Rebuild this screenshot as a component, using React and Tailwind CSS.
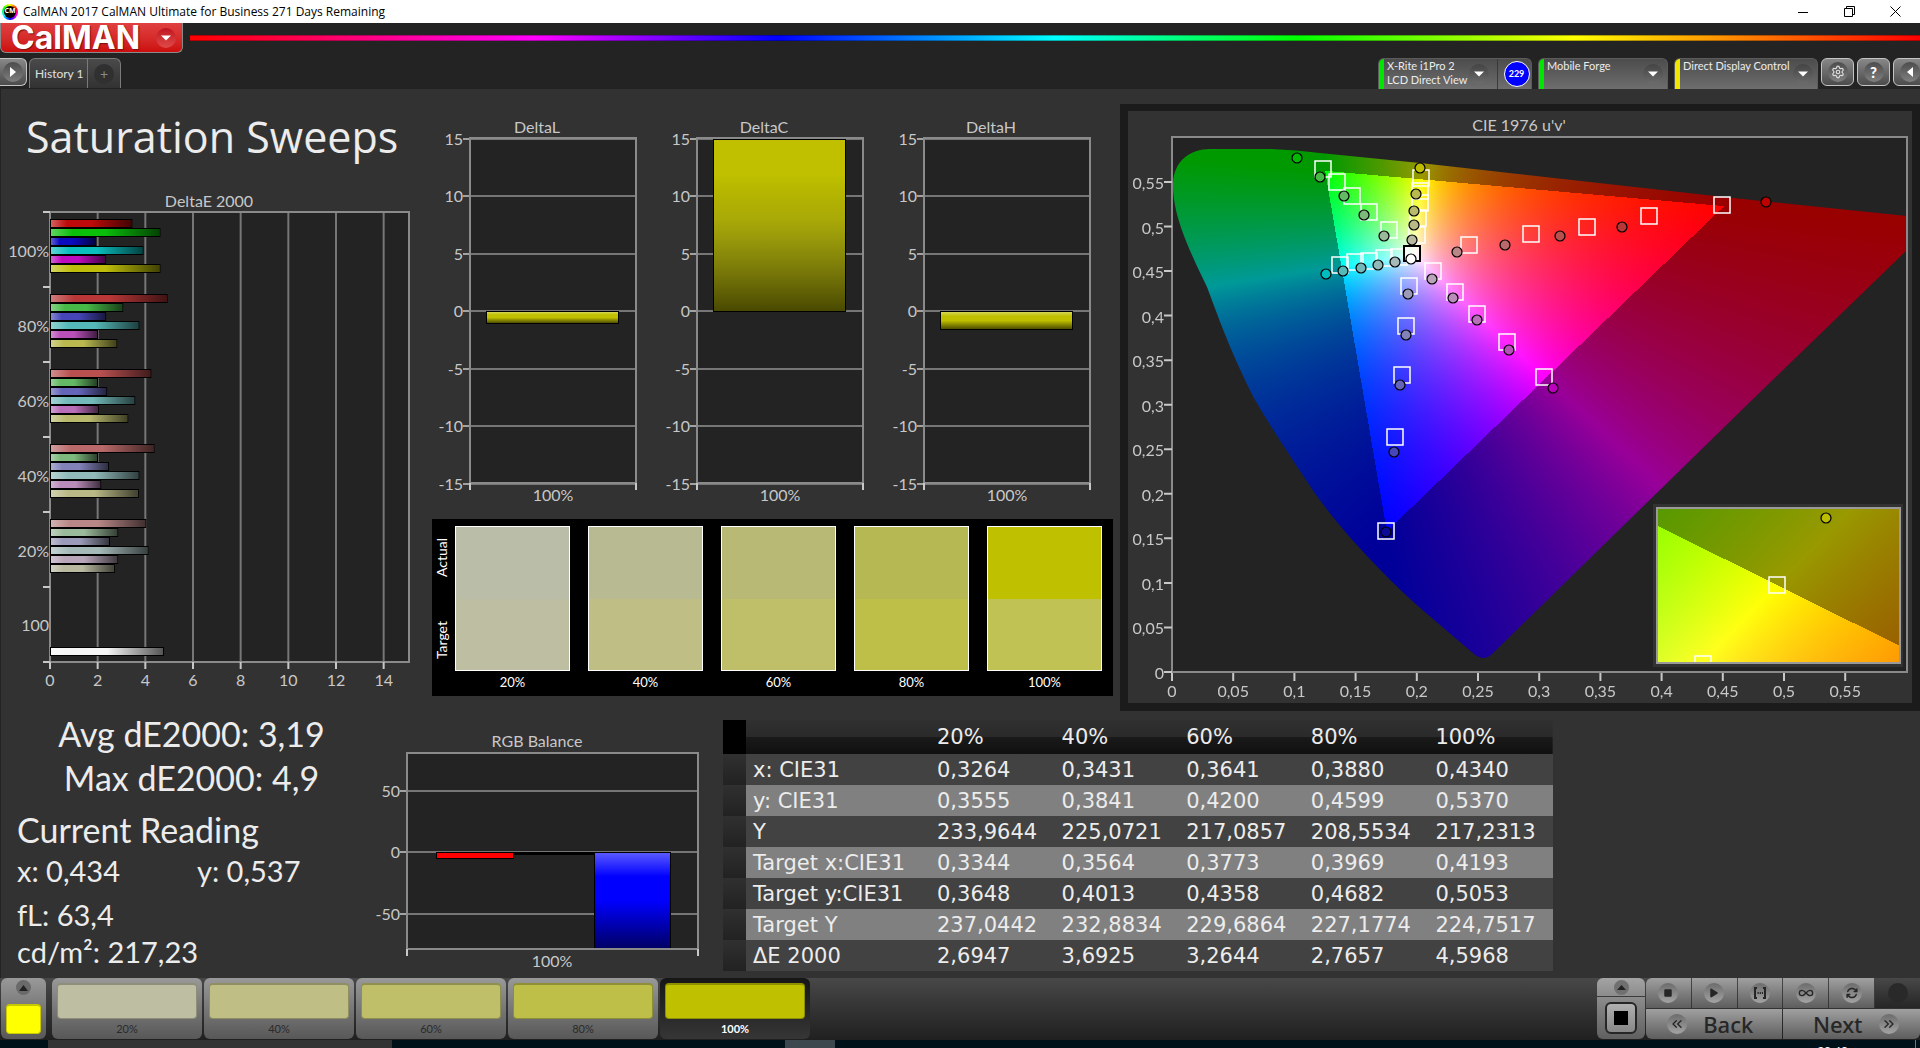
import React, { useEffect, useRef } from 'react'
import { Settings, Infinity as InfinityIcon, ChevronsLeft, ChevronsRight } from 'lucide-react'
import { FaArrowsRotate, FaPlay, FaStop } from 'react-icons/fa6'

const levels = ['20%', '40%', '60%', '80%', '100%']

const deltaE = [
  { label: '100%', bars: [[3.43, '#be0a0a'], [4.6, '#0abe0a'], [1.93, '#0a0abe'], [3.89, '#0abebe'], [2.34, '#be0abe'], [4.6, '#bebe0a']] },
  { label: '80%', bars: [[4.9, '#b93737'], [3.05, '#46b946'], [2.34, '#4646b9'], [3.72, '#55b9b9'], [2.0, '#b950b9'], [2.8, '#b9b950']] },
  { label: '60%', bars: [[4.22, '#b95050'], [2.0, '#64b964'], [2.38, '#6464b9'], [3.55, '#73b9b9'], [2.04, '#b96eb9'], [3.26, '#b9b96e']] },
  { label: '40%', bars: [[4.35, '#b96969'], [2.0, '#7db97d'], [2.46, '#8282b9'], [3.72, '#91b9b9'], [2.13, '#b98cb9'], [3.7, '#b9b987']] },
  { label: '20%', bars: [[4.01, '#b98787'], [2.84, '#9bb99b'], [2.5, '#9b9bb9'], [4.1, '#a5b9b9'], [2.84, '#b9a5b9'], [2.7, '#b9b9a0']] },
]

const swatches = [
  { label: '20%', actual: '#babda8', target: '#bebea3' },
  { label: '40%', actual: '#b8bb91', target: '#bfbf85' },
  { label: '60%', actual: '#b7b975', target: '#bfbf6a' },
  { label: '80%', actual: '#b5b853', target: '#bebf49' },
  { label: '100%', actual: '#bec000', target: '#c0c253' },
]

const steps = [
  { label: '20%', color: '#bebea3' },
  { label: '40%', color: '#bfbf85' },
  { label: '60%', color: '#bfbf6a' },
  { label: '80%', color: '#bebf49' },
  { label: '100%', color: '#bec000' },
]

const tableRows = [
  ['x: CIE31', '0,3264', '0,3431', '0,3641', '0,3880', '0,4340'],
  ['y: CIE31', '0,3555', '0,3841', '0,4200', '0,4599', '0,5370'],
  ['Y', '233,9644', '225,0721', '217,0857', '208,5534', '217,2313'],
  ['Target x:CIE31', '0,3344', '0,3564', '0,3773', '0,3969', '0,4193'],
  ['Target y:CIE31', '0,3648', '0,4013', '0,4358', '0,4682', '0,5053'],
  ['Target Y', '237,0442', '232,8834', '229,6864', '227,1774', '224,7517'],
  ['ΔE 2000', '2,6947', '3,6925', '3,2644', '2,7657', '4,5968'],
]

const targets = [
  [195, 58], [209, 71], [224, 85], [241, 101], [261, 119],
  [212, 154], [227, 151], [241, 150], [256, 147], [271, 146],
  [293, 67], [292, 80], [292, 92], [290, 107], [289, 124],
  [305, 160], [327, 181], [349, 203], [379, 231], [416, 266],
  [281, 175], [278, 215], [274, 264], [267, 326], [258, 420],
  [341, 134], [403, 123], [459, 116], [521, 105], [594, 94],
]

const readings = [
  [169, 47, '#00b900'], [192, 66, '#46b946'], [216, 85, '#64b964'], [236, 104, '#7db97d'], [256, 125, '#9bb99b'],
  [198, 163, '#00bebe'], [215, 160, '#55b9b9'], [233, 157, '#73b9b9'], [250, 154, '#91b9b9'], [267, 151, '#a5b9b9'],
  [292, 57, '#bebe00'], [288, 83, '#b9b950'], [286, 100, '#b9b96e'], [286, 114, '#b9b987'], [284, 129, '#b9b9a0'],
  [304, 168, '#b9a5b9'], [325, 187, '#b98cb9'], [349, 209, '#b96eb9'], [381, 239, '#b950b9'], [425, 277, '#be00be'],
  [280, 183, '#9b9bb9'], [278, 224, '#8282b9'], [272, 274, '#6464b9'], [266, 341, '#4646b9'], [258, 421, '#0a0a96'],
  [329, 141, '#b98787'], [377, 134, '#b96969'], [432, 125, '#b95050'], [494, 116, '#b93737'], [638, 91, '#be0000'],
  [283, 148, '#ffffff'],
]

const LOCUS = 'M1 46 C2 24 18 12 38 12 L99 12 Q125 13 148 16 L248 26 L561 61 L736 79 V112 L580 263 L320 517 Q312 525 302 517 L254 476 C215 442 170 395 142 355 C120 322 100 292 83 263 C60 218 48 185 35 150 C20 118 0 80 1 46 Z'

// plot pixel -> CIE xy
const fromUv = (px, py) => {
  const u = px / 1224.5
  const v = (535 - py) / 891
  const d = 6 * u - 16 * v + 12
  return [(9 * u) / d, (4 * v) / d]
}
const fromXy = (px, py) => [0.4193 + (px - 120) / 3305, 0.5053 - (py - 77) / 2065]

const Chromaticity = ({ width, height, project, outline }) => {
  const ref = useRef(null)

  useEffect(() => {
    const ctx = ref.current.getContext('2d')
    const image = ctx.createImageData(width, height)
    for (let py = 0; py < height; py++) {
      for (let px = 0; px < width; px++) {
        const [x, y] = project(px + 0.5, py + 0.5)
        const X = x / y
        const Z = (1 - x - y) / y
        const rgb = [
          3.2406 * X - 1.5372 - 0.4986 * Z,
          -0.9689 * X + 1.8758 + 0.0415 * Z,
          0.0557 * X - 0.204 + 1.057 * Z,
        ]
        // colours outside the gamut are clipped and dimmed
        const inside = Math.min(...rgb) >= 0
        const max = Math.max(...rgb)
        const i = (py * width + px) * 4
        rgb.forEach((c, n) => {
          image.data[i + n] = (255 * (inside ? 1 : 0.6) * Math.max(c, 0)) / max
        })
        image.data[i + 3] = 255
      }
    }
    ctx.putImageData(image, 0, 0)
    if (outline) {
      ctx.globalCompositeOperation = 'destination-in'
      ctx.fill(new Path2D(outline))
    }
  }, [width, height, project, outline])

  return <canvas ref={ref} width={width} height={height} className="block w-full h-full" />
}

const Shades = () => (
  <svg className="absolute w-0 h-0" aria-hidden="true">
    <defs>
      <linearGradient id="shadeX">
        <stop offset="0" stopColor="#fff" stopOpacity="0.35" />
        <stop offset="0.2" stopColor="#fff" stopOpacity="0" />
        <stop offset="0.5" stopColor="#000" stopOpacity="0" />
        <stop offset="1" stopColor="#000" stopOpacity="0.65" />
      </linearGradient>
      <linearGradient id="shadeY" x2="0" y2="1">
        <stop offset="0" stopColor="#fff" stopOpacity="0.35" />
        <stop offset="0.25" stopColor="#fff" stopOpacity="0" />
        <stop offset="0.5" stopColor="#000" stopOpacity="0" />
        <stop offset="1" stopColor="#000" stopOpacity="0.6" />
      </linearGradient>
      <linearGradient id="shadeTall" x2="0" y2="1">
        <stop offset="0.2" stopColor="#000" stopOpacity="0" />
        <stop offset="0.45" stopColor="#333" stopOpacity="0.15" />
        <stop offset="1" stopColor="#000" stopOpacity="0.62" />
      </linearGradient>
    </defs>
  </svg>
)

const Bar = ({ x, y, width, height, color, shade = 'url(#shadeY)' }) => (
  <g>
    <rect x={x} y={y} width={width} height={height} fill="#000" />
    <rect x={x + 1} y={y + 1} width={width - 2} height={height - 2} fill={color} />
    <rect x={x + 1} y={y + 1} width={width - 2} height={height - 2} fill={shade} />
  </g>
)

const DeltaEChart = () => (
  <svg viewBox="0 0 425 500" className="w-full h-auto font-['Lato',sans-serif] text-base" fill="#c8c8c8">
    <text x="209" y="17" textAnchor="middle">DeltaE 2000</text>
    <rect x="50" y="22" width="359" height="450" fill="#232323" />
    {[2, 4, 6, 8, 10, 12, 14].map((n) => (
      <path key={n} d={`M${50 + n * 24 - n / 6} 22V472`} stroke="#767676" strokeWidth="2" />
    ))}
    <rect x="50" y="22" width="359" height="450" fill="none" stroke="#8a8a8a" strokeWidth="2" />
    {[0, 1, 2, 3, 4, 5, 6].map((n) => (
      <path key={n} d={`M43 ${22 + n * 75}H50`} stroke="#c8c8c8" strokeWidth="2" />
    ))}
    {[0, 2, 4, 6, 8, 10, 12, 14].map((n) => (
      <g key={n}>
        <path d={`M${50 + n * 24 - n / 6} 472V479`} stroke="#c8c8c8" strokeWidth="2" />
        <text x={50 + n * 24 - n / 6} y="496" textAnchor="middle">{n}</text>
      </g>
    ))}
    {deltaE.map((group, g) => (
      <g key={group.label}>
        <text x="49" y={67 + g * 75} textAnchor="end">{group.label}</text>
        {group.bars.map(([value, color], i) => (
          <Bar key={color} x={50} y={29 + g * 75 + i * 9} width={value * 24} height={9} color={color} shade="url(#shadeX)" />
        ))}
      </g>
    ))}
    <text x="49" y="441" textAnchor="end">100</text>
    <Bar x={50} y={457} width={114} height={9} color="#f5f5f5" shade="url(#shadeX)" />
  </svg>
)

const DeltaChart = ({ title, value }) => {
  const zero = 193
  const top = value > 0 ? 21 : zero
  const height = value > 0 ? zero - 20 : Math.round(1 - value * 11.5)
  return (
    <svg viewBox="0 0 227 394" className="w-full h-auto font-['Lato',sans-serif] text-base" fill="#c8c8c8">
      <text x="112" y="15" textAnchor="middle">{title}</text>
      <rect x="45" y="20" width="166" height="345" fill="#232323" />
      {[15, 10, 5, 0, -5, -10, -15].map((n) => {
        const y = Math.round(zero - n * 11.5)
        return (
          <g key={n}>
            <path d={`M45 ${y}H211`} stroke="#767676" strokeWidth="2" />
            <path d={`M38 ${y}H45`} stroke="#c8c8c8" strokeWidth="1.5" />
            <text x="38" y={y + 6} textAnchor="end">{n}</text>
          </g>
        )
      })}
      <Bar x={61} y={top} width={133} height={height} color="#c0c000" shade={value > 0 ? 'url(#shadeTall)' : 'url(#shadeY)'} />
      <rect x="45" y="20" width="166" height="345" fill="none" stroke="#8a8a8a" strokeWidth="2" />
      <path d="M45 365V372M211 365V372" stroke="#c8c8c8" strokeWidth="2" />
      <text x="128" y="383" textAnchor="middle">100%</text>
    </svg>
  )
}

const RgbBalance = () => (
  <svg viewBox="0 0 345 245" className="w-full h-auto font-['Lato',sans-serif] text-base" fill="#c8c8c8">
    <text x="177" y="17" textAnchor="middle">RGB Balance</text>
    <rect x="47" y="23" width="291" height="196" fill="#232323" />
    {[50, 0, -50].map((n) => {
      const y = Math.round(122 - n * 1.23)
      return (
        <g key={n}>
          <path d={`M47 ${y}H338`} stroke="#767676" strokeWidth="2" />
          <path d={`M40 ${y}H47`} stroke="#c8c8c8" strokeWidth="1.5" />
          <text x="40" y={y + 6} textAnchor="end">{n}</text>
        </g>
      )
    })}
    <rect x="154" y="122" width="80" height="3" fill="#000" />
    <Bar x={76} y={122} width={78} height={7} color="#ff0000" shade="none" />
    <Bar x={234} y={122} width={77} height={97} color="#0000ff" />
    <rect x="47" y="23" width="291" height="196" fill="none" stroke="#8a8a8a" strokeWidth="2" />
    <path d="M47 219V226M338 219V226" stroke="#c8c8c8" strokeWidth="2" />
    <text x="192" y="237" textAnchor="middle">100%</text>
  </svg>
)

const decimal = (n) => String(n / 100).replace('.', ',')
const axis = [0, 5, 10, 15, 20, 25, 30, 35, 40, 45, 50, 55]

const CieChart = () => (
  <svg viewBox="0 0 784 592" className="w-full h-auto font-['Lato',sans-serif] text-base" fill="#c8c8c8">
    <text x="391" y="20" textAnchor="middle">CIE 1976 u'v'</text>
    <rect x="44" y="26" width="735" height="535" fill="#232323" />
    <foreignObject x="44" y="26" width="735" height="535">
      <Chromaticity width={735} height={535} project={fromUv} outline={LOCUS} />
    </foreignObject>
    <rect x="44" y="26" width="735" height="535" fill="none" stroke="#8a8a8a" strokeWidth="2" />
    {axis.map((n) => (
      <g key={n}>
        <path d={`M${44 + n * 12.24} 562V570M36 ${561 - n * 8.91}H44`} stroke="#c8c8c8" strokeWidth="2" />
        <text x={44 + n * 12.24} y="586" textAnchor="middle">{decimal(n)}</text>
        <text x="36" y={568 - n * 8.91} textAnchor="end">{decimal(n)}</text>
      </g>
    ))}
    {targets.map(([x, y]) => (
      <rect key={`${x}-${y}`} x={x - 8} y={y - 8} width="16" height="16" fill="none" stroke="#fff" strokeWidth="1.5" />
    ))}
    <rect x="276" y="135" width="16" height="15" fill="#fff" fillOpacity="0.5" stroke="#000" strokeWidth="2" />
    {readings.map(([x, y, color]) => (
      <circle key={`${x}-${y}`} cx={x} cy={y} r="5" fill={color} stroke="#000" strokeWidth="1.2" />
    ))}

    {/* Close-up of the selected point */}
    <rect x="525" y="393" width="250" height="163" fill="#323232" />
    <foreignObject x="529" y="397" width="243" height="155">
      <Chromaticity width={243} height={155} project={fromXy} />
    </foreignObject>
    <rect x="641" y="466" width="16" height="16" fill="none" stroke="#fff" strokeWidth="1.5" />
    <path d="M567 552V545H583V552" fill="none" stroke="#fff" strokeWidth="1.5" />
    <circle cx="698" cy="407" r="5" fill="#bebe00" stroke="#000" strokeWidth="1.2" />
    <rect x="529" y="397" width="243" height="155" fill="none" stroke="#9a9a9a" strokeWidth="2" />
  </svg>
)

const TitleBar = () => (
  <header className="flex items-center h-[23px] bg-white text-black font-['Open_Sans',sans-serif]">
    <span className="ml-0.5 w-4 h-4 rounded-full bg-[conic-gradient(#ff0,#f00,#f0f,#00f,#0ff,#0f0,#ff0)] flex items-center justify-center">
      <span className="w-3 h-3 rounded-full bg-black text-white text-[7px] font-bold flex items-center justify-center">CM</span>
    </span>
    <p className="ml-[5px] text-xs">CalMAN 2017 CalMAN Ultimate for Business 271 Days Remaining</p>
    <div className="ml-auto mr-0.5 flex items-center">
      <button aria-label="Minimize" className="w-[46px] h-[23px] flex items-center justify-center">
        <svg width="10" height="10" stroke="#000"><path d="M0 5.5H10" /></svg>
      </button>
      <button aria-label="Restore" className="w-[46px] h-[23px] flex items-center justify-center">
        <svg width="11" height="11" stroke="#000" fill="none"><path d="M0.5 2.5H8.5V10.5H0.5ZM2.5 2.5V0.5H10.5V8.5H8.5" /></svg>
      </button>
      <button aria-label="Close" className="w-[46px] h-[23px] flex items-center justify-center">
        <svg width="11" height="11" stroke="#000"><path d="M0.5 0.5L10.5 10.5M10.5 0.5L0.5 10.5" /></svg>
      </button>
    </div>
  </header>
)

const Caret = () => (
  <span className="w-5 h-5 shrink-0 rounded-full bg-linear-to-b from-[#444] to-[#6c6c6c] flex items-center justify-center">
    <svg width="10" height="6" fill="#fff"><path d="M0 0.5H10L5 5.5Z" /></svg>
  </span>
)

const LogoBar = () => (
  <div className="flex items-start h-[35px] gap-x-[7px]">
    <button className="w-[183px] h-[30px] pl-2.5 pr-3 flex items-center justify-between rounded-b-md border border-t-0 border-[#8a8a8a] bg-linear-to-b from-[#e04040] to-[#cc0c0c] text-white">
      <span className="font-['Inter',sans-serif] text-[32px] leading-7 font-bold text-shadow-[1px_1px_1px_#7a1010]">CalMAN</span>
      <span className="w-5 h-5 -mr-1.5 rounded-full bg-linear-to-b from-[#c01020] to-[#e04848] flex items-center justify-center">
        <svg width="10" height="6" fill="#fff"><path d="M0 0.5H10L5 5.5Z" /></svg>
      </span>
    </button>
    <div className="flex-1 mt-3 h-1.5 bg-[linear-gradient(90deg,#f00,#f0f_20%,#00f_34%,#0ff_50%,#0f0_64%,#ff0_80%,#f00)] border-y border-black/30" />
  </div>
)

const Source = ({ accent, lines, children }) => (
  <div className="flex h-[31px] rounded-t-md overflow-hidden border border-b-0 border-[#5c5c5c] bg-linear-to-b from-[#4c4c4c] to-[#6e6e6e]">
    <span className={`w-[5px] shrink-0 ${accent}`} />
    <button className="flex-1 flex items-center justify-between pl-[3px] pr-1 text-left text-[11px] leading-[14px] text-[#ececec]">
      <span className="self-start whitespace-nowrap">
        {lines.map((line) => <span key={line} className="block">{line}</span>)}
      </span>
      <Caret />
    </button>
    {children}
  </div>
)

const squareButton = 'h-7 w-[33px] flex items-center justify-center rounded-md border border-[#c4c4c4] bg-linear-to-b from-[#888] to-[#4c4c4c]'
const disc = 'w-5 h-5 rounded-full bg-linear-to-b from-[#4c4c4c] to-[#808080] text-white flex items-center justify-center'

const TabBar = () => (
  <nav className="flex items-start h-[31px]">
    <button aria-label="Show workflow" className="w-[27px] h-7 flex items-center justify-center rounded-r-md border border-l-0 border-[#c4c4c4] bg-linear-to-b from-[#888] to-[#4c4c4c]">
      <span className={disc}>
        <svg width="6" height="10" fill="#fff"><path d="M0 0L6 5L0 10Z" /></svg>
      </span>
    </button>
    <div className="ml-0.5 flex h-[30px] rounded-t-md border border-b-0 border-[#7a7a7a] bg-linear-to-b from-[#4a4a4a] to-[#323232]">
      <button className="px-[5px] w-[58px] text-xs text-[#e0e0e0] whitespace-nowrap border-r border-[#7a7a7a]">History 1</button>
      <button aria-label="Add tab" className="w-8 flex items-center justify-center">
        <span className="w-5 h-5 rounded-full bg-[#303030] text-[#8a8a8a] text-sm leading-5">+</span>
      </button>
    </div>

    <div className="ml-auto grid grid-cols-[154px_130px_144px_auto] gap-x-1.5">
      <Source accent="bg-[#00e600]" lines={['X-Rite i1Pro 2', 'LCD Direct View']}>
        <span className="ml-1 w-px bg-[#3a3a3a]" />
        <span className="w-[33px] pl-1 shrink-0 flex items-center justify-center">
          <span className="w-[26px] h-[26px] rounded-full border border-white bg-[#0000ff] text-white text-[9px] font-bold flex items-center justify-center">229</span>
        </span>
      </Source>
      <Source accent="bg-[#00e600]" lines={['Mobile Forge']} />
      <Source accent="bg-[#f0e600]" lines={['Direct Display Control']} />
      <div className="-ml-[3px] flex gap-x-[3px] w-[99px] overflow-hidden">
        <button aria-label="Settings" className={`${squareButton} shrink-0`}><span className={disc}><Settings className="w-3.5 h-3.5 text-[#ddd]" /></span></button>
        <button aria-label="Help" className={`${squareButton} shrink-0`}><span className={`${disc} text-[15px] font-black`}>?</span></button>
        <button aria-label="Collapse" className={`${squareButton} shrink-0`}>
          <span className={disc}><svg width="6" height="10" fill="#fff"><path d="M6 0L0 5L6 10Z" /></svg></span>
        </button>
      </div>
    </div>
  </nav>
)

const SwatchPanel = () => (
  <div className="mt-[7px] ml-[7px] mr-[7px] h-[177px] bg-black flex pr-[11px] pt-[7px] text-white text-[13px]">
    <div className="w-[23px] h-[145px] py-3 flex flex-col-reverse justify-between items-center pr-1 text-sm">
      <span className="[writing-mode:vertical-rl] rotate-180">Target</span>
      <span className="[writing-mode:vertical-rl] rotate-180">Actual</span>
    </div>
    <div className="flex-1 grid grid-cols-5 gap-x-[18px]">
      {swatches.map((s) => (
        <div key={s.label} className="text-center">
          <div className="h-[145px] border border-white flex flex-col">
            <div className="flex-1" style={{ background: s.actual }} />
            <div className="flex-1" style={{ background: s.target }} />
          </div>
          <p className="leading-[22px]">{s.label}</p>
        </div>
      ))}
    </div>
  </div>
)

const Stats = () => (
  <div className="pt-px pl-[17px] text-[#ececec] whitespace-nowrap">
    <div className="pl-1.5 text-center text-[34px] leading-[44px]">
      <p>Avg dE2000: 3,19</p>
      <p>Max dE2000: 4,9</p>
    </div>
    <h2 className="mt-2 text-[34px] leading-[44px]">Current Reading</h2>
    <div className="text-[29px] leading-[37px]">
      <div className="flex">
        <p className="w-[180px]">x: 0,434</p>
        <p>y: 0,537</p>
      </div>
      <p className="mt-[7px]">fL: 63,4</p>
      <p>cd/m²: 217,23</p>
    </div>
  </div>
)

const ReadingsTable = () => (
  <table className="w-full table-fixed border-collapse text-left text-[21px] leading-5 text-[#ececec] font-['DejaVu_Sans',sans-serif]">
    <colgroup>
      <col className="w-[23px]" />
      <col className="w-[184px]" />
      <col span="5" />
    </colgroup>
    <thead>
      <tr className="h-[34px] bg-[linear-gradient(#303030,#2a2a2a_50%,#1a1a1a_50%,#101010)]">
        <td className="bg-black" />
        <td />
        {levels.map((l) => <th key={l} scope="col" className="pl-[7px] font-normal">{l}</th>)}
      </tr>
    </thead>
    <tbody>
      {tableRows.map(([name, ...values]) => (
        <tr key={name} className="h-[31px] odd:bg-[#424242] even:bg-[#808080]">
          <td className="bg-linear-to-b from-[#303030] to-[#222]" />
          <th scope="row" className="pl-[7px] font-normal whitespace-nowrap">{name}</th>
          {values.map((v) => <td key={v} className="pl-[7px]">{v}</td>)}
        </tr>
      ))}
    </tbody>
  </table>
)

const cell = 'bg-linear-to-b from-[#a0a0a0] to-[#5e5e5e] flex items-center justify-center text-[#262626]'
const knob = 'w-5 h-5 rounded-full bg-linear-to-b from-[#6c6c6c] to-[#a4a4a4] flex items-center justify-center'

const FooterBar = () => (
  <footer className="flex h-[62px] bg-linear-to-b from-[#484848] to-[#202020] pl-px pb-px">
    <button aria-label="Current color" className="w-[45px] rounded-md bg-linear-to-b from-[#999] to-[#585858] flex flex-col items-center pt-0.5">
      <span className="w-[15px] h-[15px] rounded-full bg-[#6a6a6a] flex items-center justify-center">
        <svg width="9" height="6" fill="#222"><path d="M0 6L4.5 0L9 6Z" /></svg>
      </span>
      <span className="mt-[9px] w-[35px] h-[30px] rounded bg-[#ffff00] border border-t-2 border-[#c8c800]" />
    </button>
    <div className="ml-1.5 flex gap-x-0.5">
      {steps.map((s, i) => (
        <button
          key={s.label}
          className={i === 4
            ? 'w-[150px] rounded-md bg-linear-to-b from-[#161616] to-[#363636] text-white font-bold pt-[5px] flex flex-col items-center'
            : 'w-[150px] rounded-md bg-linear-to-b from-[#999] to-[#585858] text-[#2a2a2a] pt-[5px] flex flex-col items-center'}
        >
          <span className="w-[140px] h-9 shrink-0 rounded border border-t-2 border-black/25" style={{ background: s.color }} />
          <span className="text-[11px] leading-5">{s.label}</span>
        </button>
      ))}
    </div>

    <div className="ml-auto flex gap-x-px">
      <div className="w-12 flex flex-col gap-y-px">
        <button aria-label="Expand" className="h-[18px] rounded-t-md bg-linear-to-b from-[#a4a4a4] to-[#8c8c8c] flex items-center justify-center">
          <span className="w-[15px] h-[15px] rounded-full bg-[#707070] flex items-center justify-center">
            <svg width="9" height="5" fill="#222"><path d="M0 5L4.5 0L9 5Z" /></svg>
          </span>
        </button>
        <button aria-label="Window" className="flex-1 rounded-b-md bg-linear-to-b from-[#8c8c8c] to-[#606060] flex items-center justify-center">
          <span className="w-8 h-8 rounded-md border-2 border-[#262626] bg-linear-to-b from-[#b0b0b0] to-[#888] flex items-center justify-center">
            <span className="w-3.5 h-3.5 bg-black" />
          </span>
        </button>
      </div>
      <div className="grid grid-cols-6 grid-rows-2 gap-px w-[274px]">
        <button aria-label="Stop" className={`${cell} rounded-tl-md`}><span className={knob}><FaStop className="w-2.5 h-2.5" /></span></button>
        <button aria-label="Play" className={cell}><span className={knob}><FaPlay className="w-2.5 h-2.5" /></span></button>
        <button aria-label="Read range" className={cell}>
          <span className={knob}>
            <svg width="14" height="12" fill="none" stroke="#262626" strokeWidth="2"><path d="M4 1H2V11H4M10 1H12V11H10" /><path d="M4.5 6H10" strokeDasharray="1.2 1" /></svg>
          </span>
        </button>
        <button aria-label="Continuous" className={cell}><span className={knob}><InfinityIcon className="w-4 h-4" /></span></button>
        <button aria-label="Refresh" className={cell}><span className={knob}><FaArrowsRotate className="w-3 h-3" /></span></button>
        <button aria-label="Record" className="bg-linear-to-b from-[#484848] to-[#262626] flex items-center justify-center rounded-tr-md">
          <span className="w-5 h-5 rounded-full bg-[#292929]" />
        </button>
        <button className={`${cell} col-span-3 rounded-bl-md gap-x-4 pr-2 font-['Noto_Sans',sans-serif] text-[22px] font-medium`}>
          <span className={knob}><ChevronsLeft className="w-4 h-4" /></span>Back
        </button>
        <button className={`${cell} col-span-3 rounded-br-md gap-x-4 pl-2 font-['Noto_Sans',sans-serif] text-[22px] font-medium`}>
          Next<span className={knob}><ChevronsRight className="w-4 h-4" /></span>
        </button>
      </div>
    </div>
  </footer>
)

const Taskbar = () => (
  <div className="h-2 overflow-hidden bg-[#00111a] flex text-white text-xs">
    <div className="ml-12 w-[344px] bg-[#333]" />
    <div className="ml-[393px] w-[50px] bg-[#3c474e]" />
    <time className="ml-auto mr-[67px] pt-[3px]">20:40</time>
    <div className="w-px mr-1 bg-[#6a7880]" />
  </div>
)

const App = () => {
  return (
    <div className="min-h-screen flex flex-col bg-[#232323] font-['Lato',sans-serif]">
      <Shades />
      <TitleBar />
      <LogoBar />
      <TabBar />

      <main className="flex-1 bg-[#323232] shadow-[inset_1px_0_#232323]">
        {/* Charts */}
        <div className="grid grid-cols-[425fr_695fr_800fr]">
          <section>
            <h1 className="h-[101px] pl-[26px] pt-5 font-['Open_Sans',sans-serif] text-[43px] leading-[56px] text-[#ececec] whitespace-nowrap">Saturation Sweeps</h1>
            <DeltaEChart />
          </section>
          <section className="pt-[29px]">
            <div className="grid grid-cols-3 pr-3.5">
              <DeltaChart title="DeltaL" value={-1} />
              <DeltaChart title="DeltaC" value={16} />
              <DeltaChart title="DeltaH" value={-1.6} />
            </div>
            <SwatchPanel />
          </section>
          <section className="mt-[15px] self-start border-8 border-t-[7px] border-[#1b1b1b]">
            <CieChart />
          </section>
        </div>

        {/* Readings */}
        <div className="grid grid-cols-[360fr_345fr_848fr_367fr]">
          <Stats />
          <div className="pt-[19px]"><RgbBalance /></div>
          <div className="pt-[9px] pl-[18px]"><ReadingsTable /></div>
        </div>
      </main>

      <FooterBar />
      <Taskbar />
    </div>
  )
}

export default App
